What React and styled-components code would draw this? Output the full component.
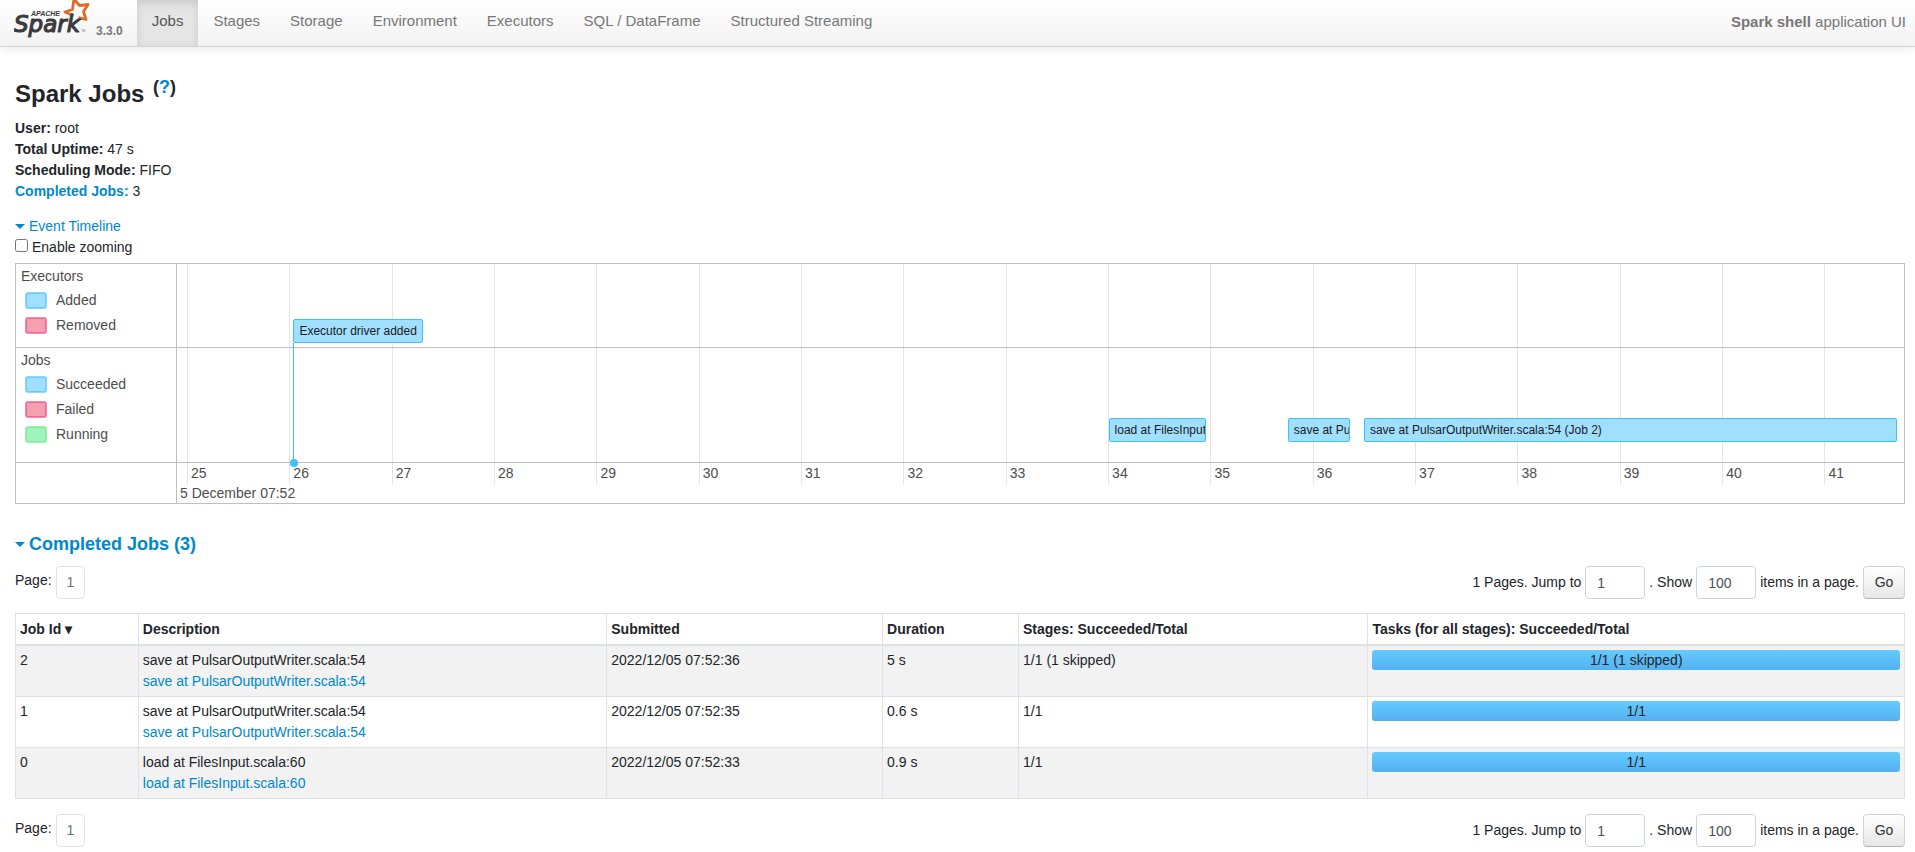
import React, { useState } from 'react';
import styled, { createGlobalStyle } from 'styled-components';

const GlobalStyle = createGlobalStyle`
    * {
        box-sizing: border-box;
    }

    body {
        margin: 0;
        background: #fff;
        color: #212529;
        font-family: "Liberation Sans", Arial, sans-serif;
        font-size: 14px;
        line-height: 21px;
    }

    a {
        color: #0088cc;
        text-decoration: none;
    }
`

const Navbar = styled.nav`
    display: flex;
    height: 47px;
    padding: 0 9px 0 14px;
    border-bottom: 1px solid #d4d4d4;
    background: linear-gradient(to bottom, #ffffff, #f2f2f2);
    box-shadow: 0 1px 10px rgba(0, 0, 0, 0.1);
`

const Brand = styled.a`
    display: flex;
    align-items: flex-end;
    gap: 4px;
    margin-right: 14px;
    padding-bottom: 8px;
`

const LogoSvg = styled.svg`
    display: block;
    width: 78px;
    height: 38px;
`

const Version = styled.span`
    color: #777;
    font-size: 12px;
    font-weight: bold;
    line-height: 14px;
`

const NavLinks = styled.div`
    display: flex;
    flex: 1;
`

const NavLink = styled.a`
    padding: 10px 15px;
    color: ${props => props.$active ? '#555' : '#777'};
    font-size: 15px;
    line-height: 22px;
    background: ${props => props.$active ? '#e5e5e5' : 'none'};
    box-shadow: ${props => props.$active ? 'inset 0 3px 8px rgba(0, 0, 0, 0.125)' : 'none'};
`

const AppName = styled.span`
    padding-top: 11px;
    color: #777;
    font-size: 15px;
    line-height: 22px;
`

const Content = styled.main`
    padding: 31px 10px 0 15px;
`

const Title = styled.h3`
    margin: 0 0 9px;
    font-size: 24px;
    line-height: 31px;

    sup {
        margin-left: 2px;
        font-size: 18px;
        line-height: 0;
    }
`

const Summary = styled.ul`
    margin: 0 0 14px;
    padding: 0;
    list-style: none;
`

const Toggle = styled.a`
    display: flex;
    align-items: center;
    gap: 4px;
`

const SectionTitle = styled.h4`
    margin: 0 0 11px;
    font-size: 18px;
    line-height: 22px;
`

const Caret = styled.span`
    width: 0;
    border: 5px solid transparent;
    border-top-color: #0088cc;
    border-bottom-width: 0;
`

const ZoomLabel = styled.label`
    display: flex;
    align-items: center;
    gap: 4px;
    margin-bottom: 5px;

    input {
        width: 13px;
        height: 13px;
        margin: 0 0 4px;
    }
`

const Timeline = styled.section`
    display: grid;
    grid-template-columns: 161px 1fr;
    grid-template-rows: 84px 115px 40px;
    margin-bottom: 29px;
    border: 1px solid #bfbfbf;
    color: #4d4d4d;
`

const GroupLabel = styled.div`
    padding: 2px 5px;
    border-right: 1px solid #bfbfbf;
    border-bottom: ${props => props.$last ? 'none' : '1px solid #bfbfbf'};
`

const LegendRow = styled.div`
    display: flex;
    align-items: center;
    gap: 9px;
    height: 25px;
    padding: 1px 0 0 4px;

    svg {
        display: block;
    }
`

const Plot = styled.div`
    position: relative;
    grid-column: 2;
    grid-row: 1 / 4;
`

const PlotRule = styled.div`
    position: absolute;
    left: 0;
    right: 0;
    top: ${props => props.$top}px;
    border-top: 1px solid #bfbfbf;
`

const Tick = styled.div`
    position: absolute;
    top: 0;
    height: 221px;
    padding: 199px 0 0 3px;
    border-left: 1px solid #e5e5e5;
`

const AxisDate = styled.div`
    position: absolute;
    left: 3px;
    top: 219px;
`

const TimelineItem = styled.div`
    position: absolute;
    top: ${props => props.$top}px;
    height: 24px;
    padding: 0 5px;
    overflow: hidden;
    border: 1px solid #3ec0ff;
    border-radius: 2px;
    background: #a0dfff;
    color: #1a1a1a;
    font-size: 12px;
    line-height: 22px;
    white-space: nowrap;
`

const Stem = styled.div`
    position: absolute;
    top: 79px;
    height: 119px;
    border-left: 1px solid #3ec0ff;

    &::after {
        content: "";
        position: absolute;
        left: -4px;
        bottom: -5px;
        width: 8px;
        height: 8px;
        border-radius: 50%;
        background: #3ec0ff;
    }
`

const PagingBar = styled.div`
    display: flex;
    justify-content: space-between;
    margin-bottom: 14px;
`

const PageList = styled.div`
    display: flex;
    gap: 4px;
    line-height: 29px;
`

const PageLink = styled.a`
    padding: 0 10px;
    border: 1px solid #dee2e6;
    border-radius: 4px;
    color: #6c757d;
    line-height: 31px;
`

const PageForm = styled.form`
    display: flex;
    align-items: center;
    gap: 4px;
`

const PageInput = styled.input`
    width: 60px;
    height: 33px;
    padding: 1px 11px 0;
    border: 1px solid #ced4da;
    border-radius: 4px;
    color: #495057;
    font: inherit;
    line-height: 20px;
`

const GoButton = styled.button`
    width: 42px;
    height: 33px;
    padding: 0;
    border: 1px solid #ced4da;
    border-bottom-color: #b3b3b3;
    border-radius: 4px;
    background: linear-gradient(to bottom, #ffffff, #e6e6e6);
    color: #333;
    font: inherit;
`

const JobTable = styled.table`
    width: 100%;
    margin-bottom: 15px;
    border-collapse: collapse;
    table-layout: fixed;

    th, td {
        padding: 4px;
        border: 1px solid #dee2e6;
        text-align: left;
        vertical-align: top;
    }

    th {
        padding-top: 5px;
        border-bottom-width: 2px;
    }

    tbody tr:nth-child(odd) {
        background: #f2f2f2;
    }
`

const DescriptionLink = styled.a`
    display: block;
`

const Progress = styled.div`
    height: 20px;
    overflow: hidden;
    border-radius: 3px;
    background: #f7f7f7;
`

const ProgressFill = styled.div`
    height: 20px;
    background: linear-gradient(to bottom, #64cbff, #54b0f0);
    line-height: 20px;
    text-align: center;
`

const tabs = ['Jobs', 'Stages', 'Storage', 'Environment', 'Executors', 'SQL / DataFrame', 'Structured Streaming'];

const seconds = [25, 26, 27, 28, 29, 30, 31, 32, 33, 34, 35, 36, 37, 38, 39, 40, 41];

const legendColors = {
    blue: { fill: '#a0dfff', stroke: '#3ec0ff' },
    red: { fill: '#f5a0b0', stroke: '#e9447a' },
    green: { fill: '#a0f3bd', stroke: '#62e87c' },
}

const groups = [
    { name: 'Executors', items: [['Added', 'blue'], ['Removed', 'red']] },
    { name: 'Jobs', items: [['Succeeded', 'blue'], ['Failed', 'red'], ['Running', 'green']] },
];

const timelineJobs = [
    { label: 'load at FilesInput.scala:60 (Job 0)', start: 34.005, end: 34.955 },
    { label: 'save at PulsarOutputWriter.scala:54 (Job 1)', start: 35.755, end: 36.36 },
    { label: 'save at PulsarOutputWriter.scala:54 (Job 2)', start: 36.5, end: 41.71 },
];

const columns = [
    ['Job Id ▾', '6.5%'],
    ['Description', '24.8%'],
    ['Submitted', '14.6%'],
    ['Duration', '7.2%'],
    ['Stages: Succeeded/Total', '18.5%'],
    ['Tasks (for all stages): Succeeded/Total', '28.4%'],
];

const jobs = [
    { id: 2, description: 'save at PulsarOutputWriter.scala:54', submitted: '2022/12/05 07:52:36', duration: '5 s', stages: '1/1 (1 skipped)', tasks: '1/1 (1 skipped)', done: 100 },
    { id: 1, description: 'save at PulsarOutputWriter.scala:54', submitted: '2022/12/05 07:52:35', duration: '0.6 s', stages: '1/1', tasks: '1/1', done: 100 },
    { id: 0, description: 'load at FilesInput.scala:60', submitted: '2022/12/05 07:52:33', duration: '0.9 s', stages: '1/1', tasks: '1/1', done: 100 },
];

// width of one second on the time axis, in percent
const secondWidth = 5.926;

const toPercent = (second) => 0.58 + (second - 25) * secondWidth;

const Logo = () => (
    <LogoSvg viewBox="0 0 78 38" role="img" aria-label="Apache Spark">
        <path
            d="M59 15.5 L51 12 L58.5 9.5 L60 -1 L65.5 5.5 L74 4.5 L69.5 11.5 L72 19.5 L64.5 17.5"
            fill="none"
            stroke="#dd6b2c"
            strokeWidth="2.8"
            strokeLinejoin="round"
        />
        <text x="17" y="16" fontFamily="Liberation Sans, sans-serif" fontSize="7" fontWeight="bold" fontStyle="italic" fill="#3c3a3e">APACHE</text>
        <text
            x="0"
            y="32"
            fontFamily="DejaVu Sans, sans-serif"
            fontSize="23"
            fontStyle="italic"
            fill="#3c3a3e"
            stroke="#3c3a3e"
            strokeWidth="1.2"
            strokeLinejoin="round"
        >
            Spark
        </text>
        <text x="67" y="32" fontFamily="Liberation Sans, sans-serif" fontSize="3" fill="#777">TM</text>
    </LogoSvg>
)

const Legend = ({ name, items }) => (
    <GroupLabel>
        {name}
        {items.map(([label, color]) =>
            <LegendRow key={label}>
                <svg width="22" height="17">
                    <rect x="1" y="1" width="20" height="15" rx="2" strokeWidth="2" strokeOpacity="0.6" {...legendColors[color]} />
                </svg>
                {label}
            </LegendRow>
        )}
    </GroupLabel>
)

const Paging = ({ id }) => {

    const [page, setPage] = useState('1');
    const [size, setSize] = useState('100');

    return (
        <PagingBar>
            <PageList>
                <span>Page:</span>
                <PageLink href="#">1</PageLink>
            </PageList>
            <PageForm onSubmit={(e) => e.preventDefault()}>
                <label htmlFor={`${id}-page`}>1 Pages. Jump to</label>
                <PageInput id={`${id}-page`} value={page} onChange={(e) => setPage(e.target.value)} />
                <label htmlFor={`${id}-size`}>. Show</label>
                <PageInput id={`${id}-size`} value={size} onChange={(e) => setSize(e.target.value)} />
                <span>items in a page.</span>
                <GoButton type="submit">Go</GoButton>
            </PageForm>
        </PagingBar>
    )
}

const App = () => {

    const [zooming, setZooming] = useState(false);

    return (
        <>
            <GlobalStyle />
            <Navbar>
                <Brand href="#">
                    <Logo />
                    <Version>3.3.0</Version>
                </Brand>
                <NavLinks>
                    {tabs.map((tab) => <NavLink key={tab} href="#" $active={tab === 'Jobs'}>{tab}</NavLink>)}
                </NavLinks>
                <AppName><strong>Spark shell</strong> application UI</AppName>
            </Navbar>
            <Content>
                <Title>Spark Jobs <sup>(<a href="#">?</a>)</sup></Title>
                <Summary>
                    <li><strong>User:</strong> root</li>
                    <li><strong>Total Uptime:</strong> 47 s</li>
                    <li><strong>Scheduling Mode:</strong> FIFO</li>
                    <li><a href="#completed"><strong>Completed Jobs:</strong></a> 3</li>
                </Summary>
                <Toggle href="#"><Caret />Event Timeline</Toggle>
                <ZoomLabel>
                    <input type="checkbox" checked={zooming} onChange={(e) => setZooming(e.target.checked)} />
                    Enable zooming
                </ZoomLabel>
                <Timeline>
                    {groups.map((group) => <Legend key={group.name} {...group} />)}
                    <GroupLabel $last />
                    <Plot>
                        {seconds.map((second) =>
                            <Tick key={second} style={{ left: `${toPercent(second)}%` }}>{second}</Tick>
                        )}
                        <PlotRule $top={83} />
                        <PlotRule $top={198} />
                        <AxisDate>5 December 07:52</AxisDate>
                        <Stem style={{ left: `${toPercent(26.04)}%` }} />
                        <TimelineItem $top={55} style={{ left: `${toPercent(26.04)}%` }}>Executor driver added</TimelineItem>
                        {timelineJobs.map((job) =>
                            <TimelineItem
                                key={job.label}
                                $top={154}
                                style={{ left: `${toPercent(job.start)}%`, width: `${(job.end - job.start) * secondWidth}%` }}
                            >
                                {job.label}
                            </TimelineItem>
                        )}
                    </Plot>
                </Timeline>
                <SectionTitle id="completed">
                    <Toggle href="#"><Caret />Completed Jobs (3)</Toggle>
                </SectionTitle>
                <Paging id="top" />
                <JobTable>
                    <colgroup>
                        {columns.map(([name, width]) => <col key={name} style={{ width }} />)}
                    </colgroup>
                    <thead>
                        <tr>
                            {columns.map(([name]) => <th key={name}>{name}</th>)}
                        </tr>
                    </thead>
                    <tbody>
                        {jobs.map((job) =>
                            <tr key={job.id}>
                                <td>{job.id}</td>
                                <td>
                                    {job.description}
                                    <DescriptionLink href="#">{job.description}</DescriptionLink>
                                </td>
                                <td>{job.submitted}</td>
                                <td>{job.duration}</td>
                                <td>{job.stages}</td>
                                <td>
                                    <Progress>
                                        <ProgressFill style={{ width: `${job.done}%` }}>{job.tasks}</ProgressFill>
                                    </Progress>
                                </td>
                            </tr>
                        )}
                    </tbody>
                </JobTable>
                <Paging id="bottom" />
            </Content>
        </>
    )
}

export default App
